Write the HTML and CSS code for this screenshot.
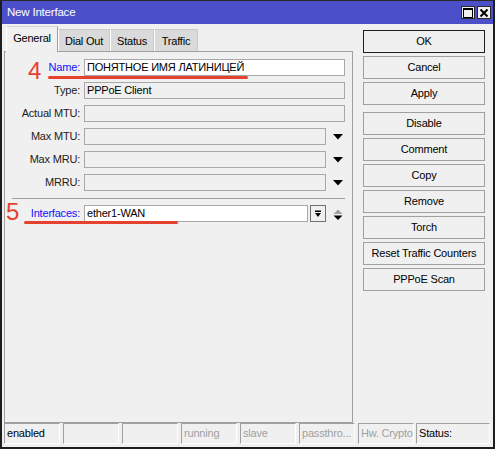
FILE: index.html
```html
<!DOCTYPE html>
<html>
<head>
<meta charset="utf-8">
<link rel="stylesheet" href="styles.css">
</head>
<body>
<div class="window">
  <div class="titlebar">
    <span class="title">New Interface</span>
    <div class="tb-buttons">
      <span class="tb-btn"><svg width="10" height="10" viewBox="0 0 10 10"><rect x="0.5" y="0.5" width="9" height="9" fill="none" stroke="#000" stroke-width="1"/><rect x="0" y="0" width="10" height="2" fill="#000"/></svg></span>
      <span class="tb-btn"><svg width="10" height="10" viewBox="0 0 10 10"><path d="M1.5 1.5 L8.5 8.5 M8.5 1.5 L1.5 8.5" stroke="#000" stroke-width="2"/></svg></span>
    </div>
  </div>
  <div class="main">
    <div class="left">
      <div class="tabs">
        <div class="tab active w52">General</div>
        <div class="tab w52">Dial Out</div>
        <div class="tab w44">Status</div>
        <div class="tab w44">Traffic</div>
      </div>
      <div class="panel">
        <div class="rows">
          <div class="row"><span class="lbl link">Name:</span><div class="field white full">ПОНЯТНОЕ ИМЯ ЛАТИНИЦЕЙ</div></div>
          <div class="row"><span class="lbl">Type:</span><div class="field full">PPPoE Client</div></div>
          <div class="row"><span class="lbl">Actual MTU:</span><div class="field full"></div></div>
          <div class="row"><span class="lbl">Max MTU:</span><div class="field drop"></div><span class="arrow"><svg width="10" height="6" viewBox="0 0 10 6"><path d="M0 0 H10 L5 5.5 Z" fill="#000"/></svg></span></div>
          <div class="row"><span class="lbl">Max MRU:</span><div class="field drop"></div><span class="arrow"><svg width="10" height="6" viewBox="0 0 10 6"><path d="M0 0 H10 L5 5.5 Z" fill="#000"/></svg></span></div>
          <div class="row"><span class="lbl">MRRU:</span><div class="field drop"></div><span class="arrow"><svg width="10" height="6" viewBox="0 0 10 6"><path d="M0 0 H10 L5 5.5 Z" fill="#000"/></svg></span></div>
          <div class="sep"></div>
          <div class="row"><span class="lbl link">Interfaces:</span><div class="field white iface">ether1-WAN</div><span class="iface-btn"><svg width="8" height="8" viewBox="0 0 8 8"><rect x="1" y="0.5" width="6" height="1.5" fill="#000"/><path d="M1 3 H7 L4 7 Z" fill="#000"/></svg></span><span class="arrow updown"><svg width="10" height="12" viewBox="0 0 10 12"><path d="M0.5 5 H9.5 L5 0.5 Z" fill="#a0a0a0"/><path d="M0.5 6.5 H9.5 L5 11 Z" fill="#000"/></svg></span></div>
        </div>
        <span class="mark mark4">4</span>
        <span class="mark mark5">5</span>
        <span class="uline uline-name"></span>
        <span class="uline uline-iface"></span>
      </div>
    </div>
    <div class="buttons">
      <div class="btn default">OK</div>
      <div class="btn">Cancel</div>
      <div class="btn">Apply</div>
      <div class="btn group">Disable</div>
      <div class="btn">Comment</div>
      <div class="btn">Copy</div>
      <div class="btn">Remove</div>
      <div class="btn">Torch</div>
      <div class="btn">Reset Traffic Counters</div>
      <div class="btn">PPPoE Scan</div>
    </div>
  </div>
  <div class="statusbar">
    <div class="cell">enabled</div>
    <div class="cell"></div>
    <div class="cell"></div>
    <div class="cell dim">running</div>
    <div class="cell dim">slave</div>
    <div class="cell dim">passthro...</div>
    <div class="cell dim">Hw. Crypto</div>
    <div class="cell last">Status:</div>
  </div>
</div>
</body>
</html>
```

FILE: styles.css
```css
* { box-sizing: border-box; }
html, body { margin: 0; padding: 0; background: #f0f0f0; }
body {
  font-family: "Liberation Sans", Arial, sans-serif;
  font-size: 11px;
  letter-spacing: -0.2px;
  color: #000;
}
.window {
  width: 495px;
  height: 449px;
  border-top: 1px solid #2a2a2a;
  border-left: 2px solid #1e1e1e;
  border-right: 2px solid #1e1e1e;
  border-bottom: 2px solid #1e1e1e;
  background: #f0f0f0;
  display: flex;
  flex-direction: column;
}
.titlebar {
  height: 23px;
  background: #4b50c9;
  display: flex;
  align-items: center;
  padding-left: 5px;
}
.title { color: #fff; line-height: 15px; font-size: 11.5px; }
.tb-buttons { margin-left: auto; display: flex; gap: 2px; margin-right: 2px; }
.tb-btn {
  width: 14px;
  height: 13px;
  background: #f0f0f0;
  border: 1px solid #2a2a2a;
  display: flex;
  align-items: center;
  justify-content: center;
}
.main { height: 399px; display: flex; }
.left { width: 351px; padding-left: 2px; display: flex; flex-direction: column; }
.tabs { height: 27px; display: flex; align-items: flex-end; padding-left: 2px; }
.tab {
  height: 22px;
  background: #dadada;
  border: 1px solid #c9c9c9;
  border-left-color: #fff;
  border-bottom: none;
  display: flex;
  align-items: center;
  justify-content: center;
  line-height: 15px;
  padding-top: 1px;
}
.tab.active {
  height: 26px;
  background: #f0f0f0;
  border-color: #d4d4d4;
  border-right-color: #a0a0a0;
  border-left-color: #fff;
  margin-bottom: -1px;
  position: relative;
  z-index: 1;
  padding-top: 0;
  padding-bottom: 3px;
}
.w52 { width: 52px; }
.w44 { width: 44px; }
.panel {
  height: 372px;
  border: 1px solid #a0a0a0;
  position: relative;
  padding-top: 7px;
}
.rows { display: flex; flex-direction: column; gap: 6px; }
.row { display: flex; align-items: center; height: 17px; }
.lbl {
  width: 75px;
  text-align: right;
  margin-right: 4px;
  color: #222;
  line-height: 15px;
}
.lbl.link { color: #1010ff; }
.field {
  height: 17px;
  border: 1px solid #a8a8a8;
  background: #f0f0f0;
  padding-left: 2px;
  line-height: 15px;
  white-space: nowrap;
  overflow: hidden;
}
.field.white { background: #fff; }
.full { width: 261px; }
.drop { width: 242px; }
.iface { width: 224px; }
.arrow { margin-left: 7px; width: 10px; display: flex; align-items: center; }
.iface-btn {
  margin-left: 2px;
  width: 16px;
  height: 17px;
  border: 1px solid #707070;
  background: #f0f0f0;
  display: flex;
  align-items: center;
  justify-content: center;
}
.updown { margin-top: 2px; }
.sep { height: 1px; background: #a0a0a0; margin: 1px 0 0 7px; width: 333px; }
.mark {
  position: absolute;
  font-family: "Liberation Sans", Arial, sans-serif;
  font-size: 24px;
  line-height: 24px;
  letter-spacing: 0;
  color: #e5412e;
}
.mark4 { left: 23px; top: 7px; }
.mark5 { left: 1px; top: 148px; }
.uline {
  position: absolute;
  height: 3px;
  background: #e5412e;
  border-radius: 2px;
}
.uline-name { left: 43px; top: 24px; width: 200px; }
.uline-iface { left: 19px; top: 169px; width: 154px; }
.buttons {
  margin-left: 10px;
  margin-top: 6px;
  width: 122px;
  display: flex;
  flex-direction: column;
  gap: 3px;
}
.btn {
  height: 23px;
  border: 1px solid #a0a0a0;
  background: #f0f0f0;
  display: flex;
  align-items: center;
  justify-content: center;
  line-height: 15px;
  white-space: nowrap;
}
.btn.default { border-color: #1e1e1e; }
.btn.group { margin-top: 4px; }
.statusbar {
  height: 21px;
  display: flex;
  gap: 3px;
  padding-left: 2px;
}
.cell {
  width: 56px;
  height: 21px;
  border: 1px solid #a0a0a0;
  border-right-color: #fff;
  border-bottom-color: #fff;
  padding-left: 2px;
  display: flex;
  align-items: center;
  line-height: 15px;
  white-space: nowrap;
  overflow: hidden;
}
.cell.dim { color: #a0a0a0; }
.cell.last { width: 74px; margin-left: -1px; }
```
